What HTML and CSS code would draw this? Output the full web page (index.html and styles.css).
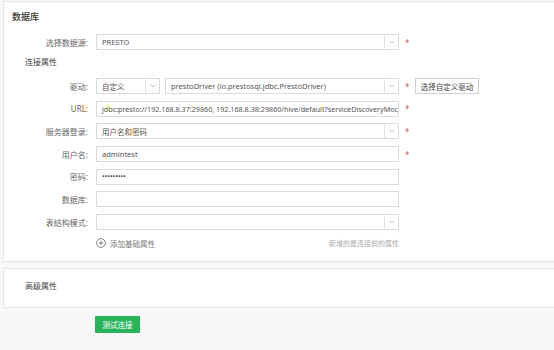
FILE: index.html
```html
<!DOCTYPE html>
<html lang="zh">
<head>
<meta charset="utf-8">
<title>数据库</title>
<link rel="stylesheet" href="styles.css">
</head>
<body>
<div class="page">
  <section class="card main">
    <h2 class="title">数据库</h2>
    <div class="row">
      <label class="label">选择数据源:</label>
      <div class="select wide"><span class="val">PRESTO</span><span class="arrow"><svg width="6" height="4" viewBox="0 0 6 4"><polyline points="0.5,0.5 3,3 5.5,0.5" fill="none" stroke="#b5b5b5" stroke-width="0.8"/></svg></span></div>
      <span class="req">*</span>
    </div>
    <div class="subtitle">连接属性</div>
    <div class="fields">
      <div class="row">
        <label class="label">驱动:</label>
        <div class="select small"><span class="val">自定义</span><span class="arrow"><svg width="6" height="4" viewBox="0 0 6 4"><polyline points="0.5,0.5 3,3 5.5,0.5" fill="none" stroke="#b5b5b5" stroke-width="0.8"/></svg></span></div>
        <div class="select driver"><span class="val">prestoDriver (io.prestosql.jdbc.PrestoDriver)</span><span class="arrow"><svg width="6" height="4" viewBox="0 0 6 4"><polyline points="0.5,0.5 3,3 5.5,0.5" fill="none" stroke="#b5b5b5" stroke-width="0.8"/></svg></span></div>
        <span class="req">*</span>
        <button class="btn-plain">选择自定义驱动</button>
      </div>
      <div class="row">
        <label class="label">URL:</label>
        <div class="input wide"><span class="val url">jdbc:presto://192.168.8.37:29860, 192.168.8.38:29860/hive/default?serviceDiscoveryMoc</span></div>
        <span class="req">*</span>
      </div>
      <div class="row">
        <label class="label">服务器登录:</label>
        <div class="select wide"><span class="val">用户名和密码</span><span class="arrow"><svg width="6" height="4" viewBox="0 0 6 4"><polyline points="0.5,0.5 3,3 5.5,0.5" fill="none" stroke="#b5b5b5" stroke-width="0.8"/></svg></span></div>
        <span class="req">*</span>
      </div>
      <div class="row">
        <label class="label">用户名:</label>
        <div class="input wide"><span class="val">admintest</span></div>
        <span class="req">*</span>
      </div>
      <div class="row">
        <label class="label">密码:</label>
        <div class="input wide"><span class="val pwd">•••••••••</span></div>
      </div>
      <div class="row">
        <label class="label">数据库:</label>
        <div class="input wide"></div>
      </div>
      <div class="row">
        <label class="label">表结构模式:</label>
        <div class="select wide"><span class="val"></span><span class="arrow"><svg width="6" height="4" viewBox="0 0 6 4"><polyline points="0.5,0.5 3,3 5.5,0.5" fill="none" stroke="#b5b5b5" stroke-width="0.8"/></svg></span></div>
      </div>
    </div>
    <div class="add-row">
      <span class="add"><svg width="10" height="10" viewBox="0 0 10 10"><circle cx="5" cy="5" r="4.4" fill="none" stroke="#666" stroke-width="0.8"/><line x1="2.8" y1="5" x2="7.2" y2="5" stroke="#666" stroke-width="0.8"/><line x1="5" y1="2.8" x2="5" y2="7.2" stroke="#666" stroke-width="0.8"/></svg>添加基础属性</span>
      <span class="note">新增的是连接前的属性</span>
    </div>
  </section>
  <section class="card adv">
    <div class="subtitle">高级属性</div>
  </section>
  <button class="btn-test">测试连接</button>
</div>
</body>
</html>
```

FILE: styles.css
```css
html, body {
  margin: 0;
  padding: 0;
}
body {
  background: #f6f7f9;
  font-family: "Noto Sans", "Noto Sans CJK SC", sans-serif;
  color: #555;
  overflow: hidden;
  width: 554px;
  height: 350px;
}
.page {
  padding: 1px 0 0 3px;
}
.card {
  background: #fff;
  border: 1px solid #e6e6e6;
  border-right: none;
}
.main {
  padding: 9px 0 12px 0;
}
.title {
  margin: 0 0 11px 8px;
  font-size: 9px;
  line-height: 12px;
  font-weight: 500;
  color: #333;
}
.subtitle {
  padding-left: 21px;
  font-size: 8px;
  line-height: 12px;
  color: #444;
  margin: 6px 0 10px;
}
.fields {
  display: flex;
  flex-direction: column;
  gap: 6.7px;
}
.row {
  display: flex;
  align-items: center;
  height: 16px;
}
.label {
  width: 84px;
  margin-right: 8px;
  text-align: right;
  font-size: 8px;
  color: #666;
  white-space: nowrap;
}
.select, .input {
  box-sizing: border-box;
  height: 16px;
  border: 1px solid #dadada;
  background: #fff;
  display: flex;
  align-items: center;
  overflow: hidden;
}
.wide {
  width: 303px;
}
.small {
  width: 64px;
  margin-right: 5px;
}
.driver {
  width: 234px;
}
.val {
  flex: 1;
  padding-left: 5px;
  font-size: 7.5px;
  color: #555;
  white-space: nowrap;
  overflow: hidden;
}
.url {
  font-size: 7.2px;
}
.pwd {
  font-size: 7px;
  letter-spacing: 0;
  color: #444;
}
.arrow {
  width: 13px;
  height: 100%;
  border-left: 1px solid #e3e3e3;
  display: flex;
  align-items: center;
  justify-content: center;
  flex: none;
}
.req {
  color: #e0506e;
  font-size: 8px;
  margin-left: 6px;
  width: 4px;
}
.btn-plain {
  margin-left: 6px;
  height: 16px;
  width: 64px;
  padding: 0;
  border: 1px solid #cfcfcf;
  background: #fff;
  font-family: inherit;
  font-size: 7.5px;
  color: #444;
}
.add-row {
  margin: 7px 0 0 92px;
  width: 303px;
  display: flex;
  justify-content: space-between;
  align-items: center;
  height: 12px;
}
.add {
  display: flex;
  align-items: center;
  gap: 4px;
  font-size: 7.5px;
  color: #777;
}
.note {
  font-size: 7px;
  color: #aaa;
}
.adv {
  margin-top: 6px;
  padding: 11px 0 15px;
}
.adv .subtitle {
  margin: 0;
}
.btn-test {
  display: block;
  margin: 8px 0 0 92px;
  width: 45px;
  height: 17px;
  padding: 0;
  border: none;
  border-radius: 1px;
  background: #2bb35c;
  color: #fff;
  font-family: inherit;
  font-size: 7.5px;
}
```
